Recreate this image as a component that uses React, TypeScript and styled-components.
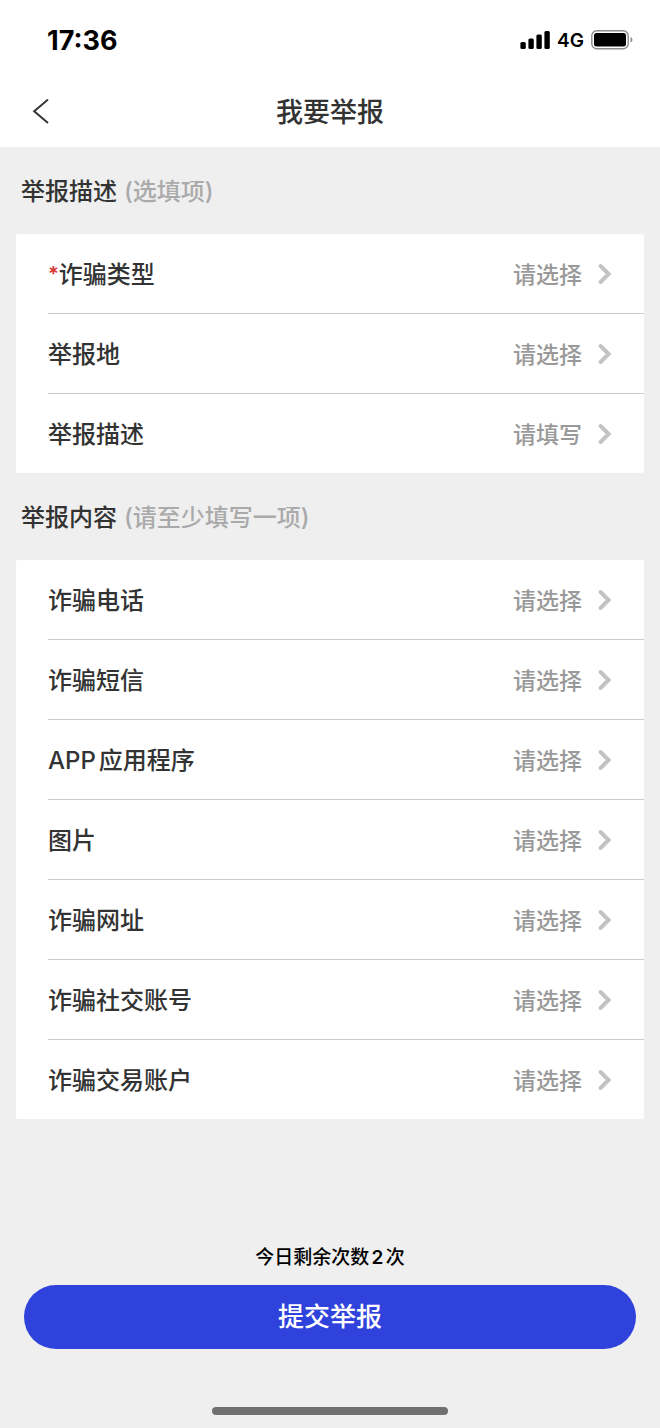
import React from 'react';
import styled, { createGlobalStyle } from 'styled-components';

const GlobalStyle = createGlobalStyle`
  *, *::before, *::after { box-sizing: border-box; }
  body {
    margin: 0;
    background: #efefef;
    color: #333;
    font-family: Inter, 'Noto Sans CJK SC', sans-serif;
    text-autospace: normal;
  }
  button { font-family: inherit; border: 0; margin: 0; cursor: pointer; }
  h1, h2, p { margin: 0; }
`;

const Page = styled.div`
  display: flex;
  flex-direction: column;
  min-height: 100vh;
`;

const Top = styled.header`
  background: #fff;
`;

const StatusBar = styled.div`
  display: flex;
  align-items: center;
  justify-content: space-between;
  height: 76px;
  padding: 4px 27px 0 47px;
  color: #000;
`;

const Time = styled.span`
  padding-top: 2px;
  font-size: 27px;
  line-height: 32px;
  font-weight: 700;
`;

const StatusIcons = styled.div`
  display: flex;
  align-items: center;
  gap: 7px;
  font-size: 19px;
  line-height: 24px;
  font-weight: 600;
`;

const Network = styled.span`
  padding-top: 2px;
`;

const NavBar = styled.div`
  display: grid;
  grid-template-columns: 80px 1fr 80px;
  align-items: center;
  height: 71px;
`;

const BackButton = styled.button`
  display: flex;
  align-items: center;
  height: 71px;
  padding: 0 0 0 32px;
  background: none;
`;

const Title = styled.h1`
  padding-top: 2px;
  font-size: 27px;
  line-height: 40px;
  font-weight: 500;
  text-align: center;
`;

const Section = styled.section`
  padding: 0 16px;
`;

const SectionTitle = styled.h2`
  display: flex;
  align-items: center;
  gap: 7px;
  height: 87px;
  padding: 2px 0 0 5px;
  font-size: 24px;
  line-height: 36px;
  font-weight: 500;
`;

const Hint = styled.span`
  color: #aaa;
`;

const Card = styled.div`
  padding-left: 32px;
  border-radius: 2px;
  background: #fff;
`;

const Row = styled.button`
  display: flex;
  align-items: center;
  width: 100%;
  height: 79px;
  padding: 0 32px 0 0;
  background: none;
  color: #333;
  font-size: 24px;
  line-height: 36px;
  font-weight: 500;
  text-align: left;

  & + & {
    height: 80px;
    border-top: 1px solid #ccc;
  }
`;

const Label = styled.span`
  flex: 1;
  padding-top: 2px;
`;

const Required = styled.span`
  color: #d8302c;
  font-size: 20px;
  line-height: 20px;
  font-weight: 600;
  vertical-align: 2px;
`;

const Value = styled.span`
  margin-right: 16px;
  padding-top: 2px;
  color: #999;
  font-size: 23px;
`;

const Footer = styled.footer`
  display: flex;
  flex-direction: column;
  align-items: center;
  margin-top: auto;
  padding: 40px 24px 13px;
`;

const Remaining = styled.p`
  margin-bottom: 13px;
  color: #000;
  font-size: 19px;
  line-height: 28px;
  font-weight: 500;
`;

const Count = styled.strong`
  font-weight: 600;
`;

const Submit = styled.button`
  width: 100%;
  height: 64px;
  margin-bottom: 58px;
  padding: 0;
  border-radius: 32px;
  background: #2f43dc;
  color: #fff;
  font-size: 26px;
  line-height: 40px;
  font-weight: 500;
`;

const HomeIndicator = styled.div`
  width: 236px;
  height: 8px;
  border-radius: 4px;
  background: #707070;
`;

const Signal = () => (
  <svg width="30" height="19" viewBox="0 0 30 19" aria-hidden="true">
    <rect x="0.4" y="11" width="5.4" height="7" rx="1.5" />
    <rect x="8.4" y="7.5" width="5.4" height="10.5" rx="1.5" />
    <rect x="16.4" y="3.5" width="5.4" height="14.5" rx="1.5" />
    <rect x="24.4" y="0" width="5.4" height="18" rx="1.5" />
  </svg>
);

const Battery = () => (
  <svg width="42" height="20" viewBox="0 0 42 20" aria-hidden="true">
    <rect x="0.8" y="0.7" width="36.4" height="18" rx="5" fill="none" stroke="#8c8c8c" strokeWidth="1.4" />
    <rect x="3" y="3" width="32" height="13.4" rx="2.5" />
    <path d="M39.5 6.9c2.6 1 2.6 4.6 0 5.6z" fill="#8c8c8c" />
  </svg>
);

const BackIcon = () => (
  <svg width="18" height="26" viewBox="0 0 18 26" fill="none" aria-hidden="true">
    <path d="M16 0.6L2.2 12.2L16 24" stroke="#333" strokeWidth="2" />
  </svg>
);

const Chevron = () => (
  <svg width="14" height="22" viewBox="0 0 14 22" fill="none" aria-hidden="true">
    <path d="M2.6 3L10.6 11L2.6 19" stroke="#c3c3c3" strokeWidth="4" strokeLinecap="round" />
  </svg>
);

interface Field {
  label: string;
  value: string;
  required?: boolean;
}

const description: Field[] = [
  { label: '诈骗类型', value: '请选择', required: true },
  { label: '举报地', value: '请选择' },
  { label: '举报描述', value: '请填写' },
];

const content: Field[] = [
  '诈骗电话',
  '诈骗短信',
  'APP应用程序',
  '图片',
  '诈骗网址',
  '诈骗社交账号',
  '诈骗交易账户',
].map((label) => ({ label, value: '请选择' }));

const FieldGroup = ({ title, hint, fields }: { title: string; hint: string; fields: Field[] }) => (
  <Section>
    <SectionTitle>
      {title}
      <Hint>({hint})</Hint>
    </SectionTitle>
    <Card>
      {fields.map(({ label, value, required }) => (
        <Row type="button" key={label}>
          <Label>
            {required && <Required>*</Required>}
            {label}
          </Label>
          <Value>{value}</Value>
          <Chevron />
        </Row>
      ))}
    </Card>
  </Section>
);

export default function App() {
  return (
    <Page lang="zh-CN">
      <GlobalStyle />
      <Top>
        <StatusBar>
          <Time>17:36</Time>
          <StatusIcons>
            <Signal />
            <Network>4G</Network>
            <Battery />
          </StatusIcons>
        </StatusBar>
        <NavBar>
          <BackButton type="button" aria-label="返回">
            <BackIcon />
          </BackButton>
          <Title>我要举报</Title>
        </NavBar>
      </Top>
      <main>
        <FieldGroup title="举报描述" hint="选填项" fields={description} />
        <FieldGroup title="举报内容" hint="请至少填写一项" fields={content} />
      </main>
      <Footer>
        <Remaining>
          今日剩余次数<Count>2</Count>次
        </Remaining>
        <Submit type="button">提交举报</Submit>
        <HomeIndicator />
      </Footer>
    </Page>
  );
}
